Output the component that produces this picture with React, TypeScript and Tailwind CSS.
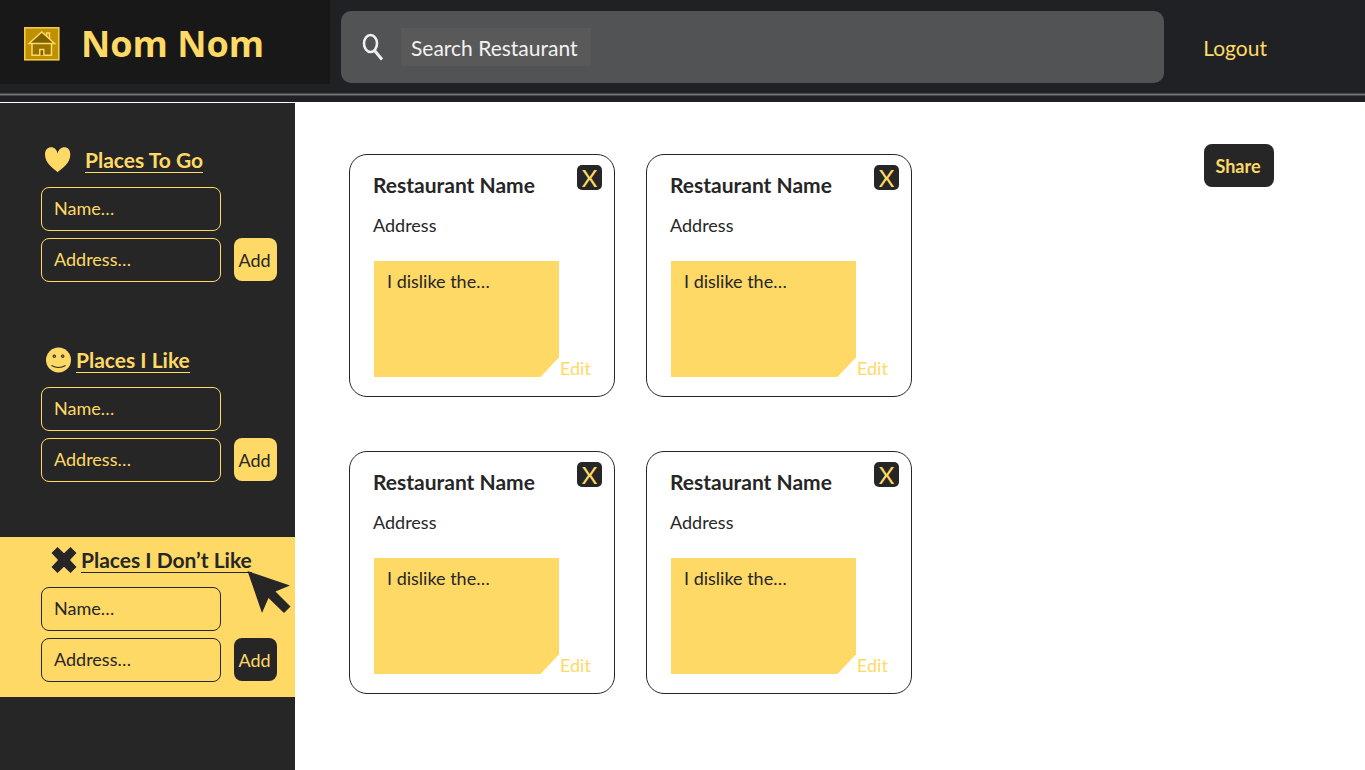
import React from "react";

const FONT = "font-['Lato','Liberation_Sans',sans-serif]";

function HouseIcon() {
  return (
    <svg viewBox="0 0 36 34" className="h-[34px] w-9 shrink-0" aria-hidden="true">
      <rect x="0.800" y="0.800" width="34" height="32" fill="#bf9000" stroke="#f2c94c" strokeWidth="1.600" />
      <path d="M8 16.500V28.300H27.500V16.500" fill="#997300" stroke="#ffd966" strokeWidth="1.500" />
      <path d="M22.500 9V6H25.500V12" fill="none" stroke="#ffd966" strokeWidth="1.400" />
      <path d="M5 16.500L17.800 5L30.500 16.500Z" fill="#7f6000" stroke="#ffd966" strokeWidth="1.500" />
      <path d="M15.800 28.300V22.500H19.800V28.300" fill="#7f6000" stroke="#ffd966" strokeWidth="1.400" />
    </svg>
  );
}

function SearchIcon() {
  return (
    <svg viewBox="0 0 22 28" className="h-7 w-[22px] shrink-0" fill="none" stroke="#f0f0f0" aria-hidden="true">
      <ellipse cx="8.500" cy="10.500" rx="6.500" ry="8.500" strokeWidth="2.600" />
      <path d="M12.500 17.500L20 26.500" strokeWidth="3" />
    </svg>
  );
}

function HeartIcon() {
  return (
    <svg viewBox="0 0 26 26" className="h-[26px] w-[26px]" fill="#ffd966" aria-hidden="true">
      <path d="M12.600 25.200C9 21.500 0 17 0 7.500C0 2.500 3 .3 6 .3C9.500 .3 12 3 12.600 6.500C13.200 3 16 .3 19.500 .3C22.500 .3 25.300 2.500 25.300 7.500C25.300 17 16.500 21.500 12.600 25.200Z" />
    </svg>
  );
}

function SmileIcon() {
  return (
    <svg viewBox="0 0 26 26" className="h-[26px] w-[26px]" aria-hidden="true">
      <circle cx="13.500" cy="13" r="12.500" fill="#ffd966" />
      <g fill="#a08840" stroke="#262626" strokeWidth="1">
        <circle cx="9.300" cy="9.200" r="1.300" />
        <circle cx="17.700" cy="9.200" r="1.300" />
      </g>
      <path d="M6.500 18.500Q13.500 22.500 20.500 18.500" fill="none" stroke="#262626" strokeWidth="1.100" />
    </svg>
  );
}

function CrossIcon() {
  return (
    <svg viewBox="0 0 26 26" className="h-[26px] w-[26px]" fill="#262626" aria-hidden="true">
      <path d="M6.500 0L13 6.300L19.500 0L25.500 6L19 13L25.500 20L19.500 26L13 19.700L6.500 26L.5 20L7 13L.5 6Z" />
    </svg>
  );
}

type SectionProps = {
  id: string;
  title: string;
  icon: React.ReactNode;
  dark?: boolean;
  headingClass: string;
};

function PlaceSection({ id, title, icon, dark, headingClass }: SectionProps) {
  const field = dark
    ? "border-[#262626] text-[#262626] placeholder:text-[#262626]"
    : "border-[#ffd966] text-[#ffd966] placeholder:text-[#ffd966]";
  return (
    <form
      className={`relative pt-[10px] pr-4 pb-[15px] pl-[41px] ${dark ? "bg-[#ffd966]" : ""}`}
      onSubmit={(e) => e.preventDefault()}
    >
      <div className={`flex items-center ${headingClass}`}>
        {icon}
        <h2
          className={`border-b text-[21px] leading-[25px] font-bold whitespace-nowrap ${
            dark ? "border-[#262626] text-[#262626]" : "border-[#ffd966] text-[#ffd966]"
          }`}
        >
          {title}
        </h2>
      </div>
      <input
        aria-label={`${title}: name`}
        id={`${id}-name`}
        placeholder="Name…"
        className={`mt-[14px] block h-11 w-[180px] rounded-lg border bg-transparent px-3 pb-0.5 text-lg placeholder:opacity-100 ${field}`}
      />
      <div className="mt-[7px] flex items-start gap-[13px]">
        <input
          aria-label={`${title}: address`}
          id={`${id}-address`}
          placeholder="Address…"
          className={`h-11 w-[180px] rounded-lg border bg-transparent px-3 pb-0.5 text-lg placeholder:opacity-100 ${field}`}
        />
        <button
          className={`h-[43px] w-[43px] rounded-lg pr-0.5 text-lg ${
            dark ? "bg-[#262626] text-[#ffd966]" : "bg-[#ffd966] text-[#262626]"
          }`}
        >
          Add
        </button>
      </div>
      {dark && (
        <svg viewBox="0 0 44 44" className="absolute top-[33px] left-[247px] h-11 w-11" fill="#262626" aria-hidden="true">
          <path d="M.5 1L43 15.500L28.500 21.500L43.500 36.500L37 43L21.500 28L15 43Z" />
        </svg>
      )}
    </form>
  );
}

function RestaurantCard() {
  return (
    <article className="relative rounded-[18px] border border-[#262626] px-[23px] pt-[17px] pb-[19px] text-[#262626]">
      <h3 className="text-[21px] leading-[26px] font-bold">Restaurant Name</h3>
      <p className="mt-[15px] text-lg leading-6">Address</p>
      <button
        aria-label="Remove"
        className="absolute top-[10px] right-3 flex h-[25px] w-[25px] items-center justify-center rounded-[5px] bg-[#262626] text-2xl leading-6 text-[#ffd966]"
      >
        X
      </button>
      <div className="mt-6 ml-px flex items-end gap-px">
        <p className="h-[116px] w-[185px] shrink-0 bg-[#ffd966] px-[13px] pt-2 text-lg leading-6 [clip-path:polygon(0_0,100%_0,100%_83%,90%_100%,0_100%)]">
          I dislike the…
        </p>
        <button className="pb-px text-lg leading-4 text-[#ffd966]">Edit</button>
      </div>
    </article>
  );
}

export default function App() {
  return (
    <div className={`flex min-h-screen flex-col bg-white ${FONT}`}>
      <header className="bg-[#202124]">
        <div className="flex h-[93px] items-start">
          <div className="flex h-[84px] w-[330px] shrink-0 items-center gap-[21px] bg-[#181818] pt-[3px] pl-6">
            <HouseIcon />
            <h1 className="font-['Open_Sans','Noto_Sans',sans-serif] text-4xl leading-[46px] font-bold whitespace-nowrap text-[#ffd966]">
              Nom Nom
            </h1>
          </div>
          <div className="mt-[11px] ml-[11px] flex h-[72px] flex-1 items-center rounded-[10px] bg-[#525355] pl-[21px]">
            <SearchIcon />
            <input
              type="text"
              aria-label="Search Restaurant"
              placeholder="Search Restaurant"
              className="ml-[17px] h-[38px] w-[190px] bg-[#595959] px-[10px] text-[21px] text-[#f2f2f2] placeholder:text-[#f2f2f2] placeholder:opacity-100"
            />
          </div>
          <a href="#logout" className="mt-[35px] mr-[98px] ml-[39px] text-[21px] leading-[26px] text-[#ffd966]">
            Logout
          </a>
        </div>
        <div className="h-[3px] border-y border-[#44464a] bg-[#75777a]" />
        <div className="h-1.5" />
      </header>
      <div className="flex flex-1">
        <aside className="mt-px flex w-[295px] shrink-0 flex-col gap-10 bg-[#262626] pt-[34px]">
          <PlaceSection id="go" title="Places To Go" icon={<HeartIcon />} headingClass="pl-1 gap-[14px]" />
          <PlaceSection id="like" title="Places I Like" icon={<SmileIcon />} headingClass="pl-1 gap-[5px]" />
          <PlaceSection id="dislike" title="Places I Don’t Like" icon={<CrossIcon />} headingClass="pl-[10px] gap-1" dark />
        </aside>
        <main className="flex flex-1 items-start justify-between pt-[42px] pr-[91px] pl-[54px]">
          <div className="grid grid-cols-[266px_266px] gap-x-[31px] gap-y-[54px] pt-[10px]">
            <RestaurantCard />
            <RestaurantCard />
            <RestaurantCard />
            <RestaurantCard />
          </div>
          <button className="h-[43px] w-[70px] rounded-lg bg-[#262626] pr-0.5 text-lg font-bold text-[#ffd966]">
            Share
          </button>
        </main>
      </div>
    </div>
  );
}
